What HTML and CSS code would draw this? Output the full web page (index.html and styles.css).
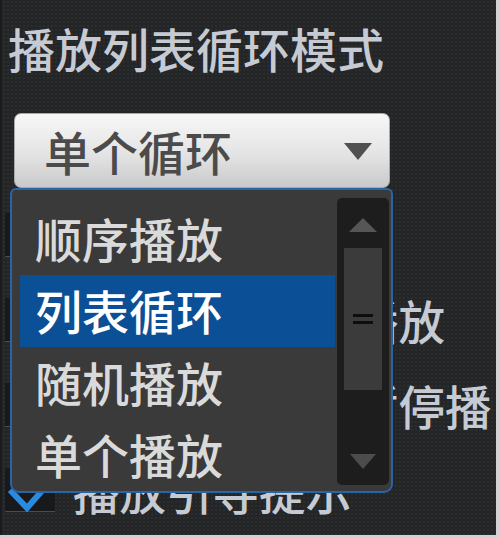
FILE: index.html
```html
<!DOCTYPE html>
<html lang="zh-CN">
<head>
    <meta charset="UTF-8">
    <meta name="viewport" content="width=device-width, initial-scale=1.0">
    <title>播放设置</title>
    <link rel="stylesheet" href="styles.css">
</head>
<body>
    <div class="panel">
        <div class="section-title">播放列表循环模式</div>

        <div class="select-wrap">
            <div class="select">
                <span class="select-value">单个循环</span>
                <span class="select-arrow"></span>
            </div>

            <div class="dropdown">
                <ul class="option-list">
                    <li class="option">顺序播放</li>
                    <li class="option selected">列表循环</li>
                    <li class="option">随机播放</li>
                    <li class="option">单个播放</li>
                </ul>
                <div class="scrollbar">
                    <div class="scroll-btn"><span class="tri-up"></span></div>
                    <div class="scroll-thumb"><span class="grip"></span><span class="grip"></span></div>
                    <div class="scroll-track"></div>
                    <div class="scroll-btn down"><span class="tri-down"></span></div>
                </div>
            </div>
        </div>

        <div class="settings">
            <div class="setting-row">
                <span class="checkbox"></span>
                <span class="setting-label">显示桌面歌词</span>
            </div>
            <div class="setting-row">
                <span class="checkbox"></span>
                <span class="setting-label">打开软件自动播放</span>
            </div>
            <div class="setting-row">
                <span class="checkbox"></span>
                <span class="setting-label">拔出耳机后即暂停播放</span>
            </div>
            <div class="setting-row">
                <span class="checkbox checked">
                    <svg width="50" height="44" viewBox="0 0 50 44">
                        <polyline points="5,22 22,40 50,8" fill="none" stroke="#2a8ae0" stroke-width="6"/>
                    </svg>
                </span>
                <span class="setting-label">播放引导提示</span>
            </div>
        </div>
    </div>
</body>
</html>
```

FILE: styles.css
```css
body {
    margin: 0;
    background-color: #d2d2d2;
    font-family: "Noto Sans CJK SC", "Noto Sans", sans-serif;
}

.panel {
    width: 496px;
    height: 535px;
    border-left: 2px solid #1a1b1c;
    background-color: #232527;
    background-image: radial-gradient(rgba(255, 255, 255, 0.035) 1px, transparent 1px);
    background-size: 4px 4px;
    padding-left: 6px;
    box-sizing: border-box;
    overflow: hidden;
    position: relative;
}

.section-title {
    margin-top: 21px;
    font-size: 47px;
    line-height: 54px;
    font-weight: 500;
    color: #c6cbd3;
    white-space: nowrap;
}

.select-wrap {
    position: relative;
    margin-top: 38px;
    margin-left: 6px;
    width: 376px;
    z-index: 2;
}

.select {
    height: 75px;
    box-sizing: border-box;
    border: 1px solid #a9a9a9;
    border-radius: 7px;
    background: linear-gradient(#f7f7f7, #e4e4e4 55%, #c9c9c9);
    display: flex;
    align-items: center;
    justify-content: space-between;
    padding: 0 17px 0 29px;
}

.select-value {
    font-size: 47px;
    line-height: 54px;
    font-weight: 500;
    color: #4b4b4b;
}

.select-arrow {
    width: 0;
    height: 0;
    border-left: 14px solid transparent;
    border-right: 14px solid transparent;
    border-top: 17px solid #505050;
    margin-top: 2px;
}

.dropdown {
    position: absolute;
    top: 75px;
    left: -4px;
    width: 383px;
    height: 305px;
    box-sizing: border-box;
    border: 2px solid #2565a8;
    border-radius: 6px 6px 9px 9px;
    background-color: #3a3a3a;
    display: flex;
    gap: 2px;
}

.option-list {
    list-style: none;
    margin: 0 0 0 8px;
    padding: 13px 0 0;
    width: 315px;
}

.option {
    height: 72px;
    display: flex;
    align-items: center;
    padding-left: 15px;
    padding-bottom: 4px;
    box-sizing: border-box;
    font-size: 47px;
    font-weight: 500;
    color: #dadada;
}

.option.selected {
    background-color: #0b4f96;
    color: #ffffff;
}

.scrollbar {
    margin-top: 8px;
    width: 52px;
    height: 287px;
    border-radius: 5px;
    background-color: #1d1d1d;
    display: flex;
    flex-direction: column;
    align-items: center;
}

.scroll-btn {
    height: 50px;
    width: 100%;
    display: flex;
    align-items: center;
    justify-content: center;
}

.scroll-btn.down {
    height: 45px;
}

.tri-up {
    width: 0;
    height: 0;
    border-left: 14px solid transparent;
    border-right: 14px solid transparent;
    border-bottom: 14px solid #565656;
    margin-top: 4px;
}

.tri-down {
    width: 0;
    height: 0;
    border-left: 13px solid transparent;
    border-right: 13px solid transparent;
    border-top: 15px solid #4c4c4c;
    margin-bottom: 2px;
}

.scroll-thumb {
    width: 38px;
    height: 142px;
    background-color: #3b3b3b;
    display: flex;
    flex-direction: column;
    align-items: center;
    justify-content: center;
    gap: 4px;
}

.grip {
    width: 20px;
    height: 3px;
    background-color: #0e0e0e;
}

.scroll-track {
    flex: 1;
}

.settings {
    margin-top: 7px;
    margin-left: -3px;
    width: 486px;
    overflow: hidden;
}

.setting-row {
    height: 85px;
    display: flex;
    align-items: center;
    gap: 18px;
    padding-bottom: 5px;
    box-sizing: border-box;
}

.checkbox {
    flex: none;
    width: 50px;
    height: 44px;
    box-sizing: border-box;
    background-color: #18191a;
    border-bottom: 1px solid #4a4c4e;
}

.checkbox svg {
    display: block;
}

.setting-label {
    font-size: 46.5px;
    line-height: 54px;
    font-weight: 500;
    color: #c6cbd3;
    white-space: nowrap;
}
```
